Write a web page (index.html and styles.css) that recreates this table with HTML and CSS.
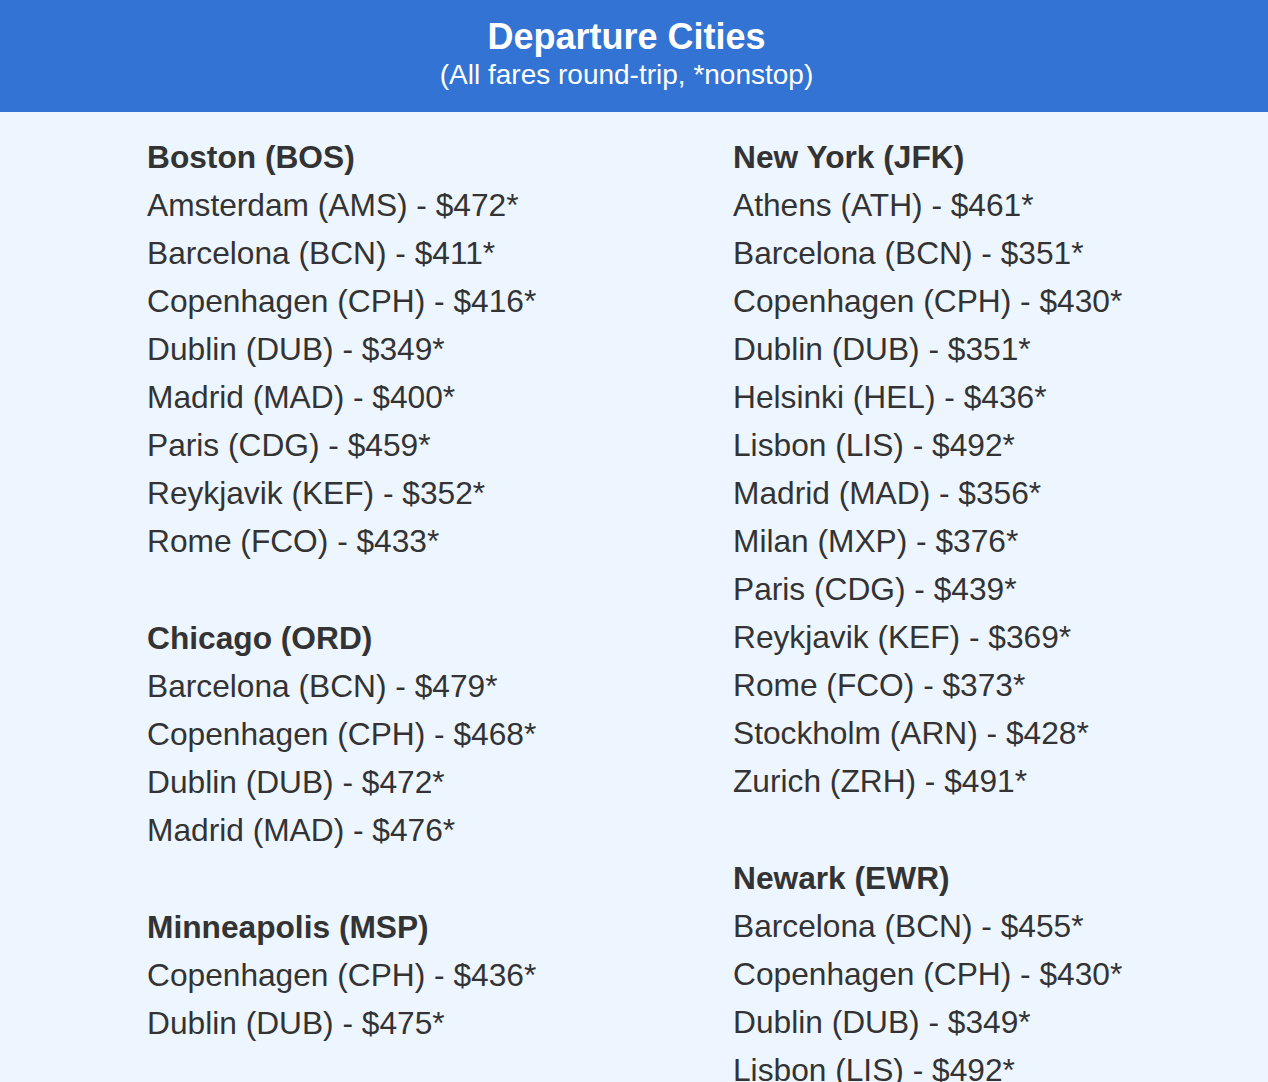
FILE: index.html
```html
<!DOCTYPE html>
<html lang="en">
<head>
<meta charset="utf-8">
<title>Departure Cities</title>
<link rel="stylesheet" href="styles.css">
</head>
<body>
<header class="banner">
  <h1 class="banner-title">Departure Cities</h1>
  <p class="banner-sub">(All fares round-trip, *nonstop)</p>
</header>
<main class="cities">
  <div class="col">
    <section class="city">
      <h2 class="city-name">Boston (BOS)</h2>
      <ul class="fares">
        <li>Amsterdam (AMS) - $472*</li>
        <li>Barcelona (BCN) - $411*</li>
        <li>Copenhagen (CPH) - $416*</li>
        <li>Dublin (DUB) - $349*</li>
        <li>Madrid (MAD) - $400*</li>
        <li>Paris (CDG) - $459*</li>
        <li>Reykjavik (KEF) - $352*</li>
        <li>Rome (FCO) - $433*</li>
      </ul>
    </section>
    <section class="city">
      <h2 class="city-name">Chicago (ORD)</h2>
      <ul class="fares">
        <li>Barcelona (BCN) - $479*</li>
        <li>Copenhagen (CPH) - $468*</li>
        <li>Dublin (DUB) - $472*</li>
        <li>Madrid (MAD) - $476*</li>
      </ul>
    </section>
    <section class="city">
      <h2 class="city-name">Minneapolis (MSP)</h2>
      <ul class="fares">
        <li>Copenhagen (CPH) - $436*</li>
        <li>Dublin (DUB) - $475*</li>
      </ul>
    </section>
  </div>
  <div class="col">
    <section class="city">
      <h2 class="city-name">New York (JFK)</h2>
      <ul class="fares">
        <li>Athens (ATH) - $461*</li>
        <li>Barcelona (BCN) - $351*</li>
        <li>Copenhagen (CPH) - $430*</li>
        <li>Dublin (DUB) - $351*</li>
        <li>Helsinki (HEL) - $436*</li>
        <li>Lisbon (LIS) - $492*</li>
        <li>Madrid (MAD) - $356*</li>
        <li>Milan (MXP) - $376*</li>
        <li>Paris (CDG) - $439*</li>
        <li>Reykjavik (KEF) - $369*</li>
        <li>Rome (FCO) - $373*</li>
        <li>Stockholm (ARN) - $428*</li>
        <li>Zurich (ZRH) - $491*</li>
      </ul>
    </section>
    <section class="city">
      <h2 class="city-name">Newark (EWR)</h2>
      <ul class="fares">
        <li>Barcelona (BCN) - $455*</li>
        <li>Copenhagen (CPH) - $430*</li>
        <li>Dublin (DUB) - $349*</li>
        <li>Lisbon (LIS) - $492*</li>
      </ul>
    </section>
  </div>
</main>
</body>
</html>
```

FILE: styles.css
```css
html, body {
  margin: 0;
  padding: 0;
}
body {
  background: #edf5ff;
  font-family: "Liberation Sans", Arial, Helvetica, sans-serif;
  color: #333333;
}
.banner {
  background: #3273d3;
  color: #ffffff;
  text-align: center;
  padding: 17px 15px 19px 0;
}
.banner-title {
  margin: 0;
  font-size: 36px;
  line-height: 40px;
  font-weight: bold;
}
.banner-sub {
  margin: 0;
  font-size: 28px;
  line-height: 36px;
}
.cities {
  display: grid;
  grid-template-columns: 586px 1fr;
  padding: 21px 0 0 147px;
}
.city {
  margin-bottom: 49px;
}
.city-name {
  margin: 0;
  font-size: 31.7px;
  line-height: 48px;
  font-weight: bold;
}
.fares {
  list-style: none;
  margin: 0;
  padding: 0;
  font-size: 31.7px;
  line-height: 48px;
}
```
